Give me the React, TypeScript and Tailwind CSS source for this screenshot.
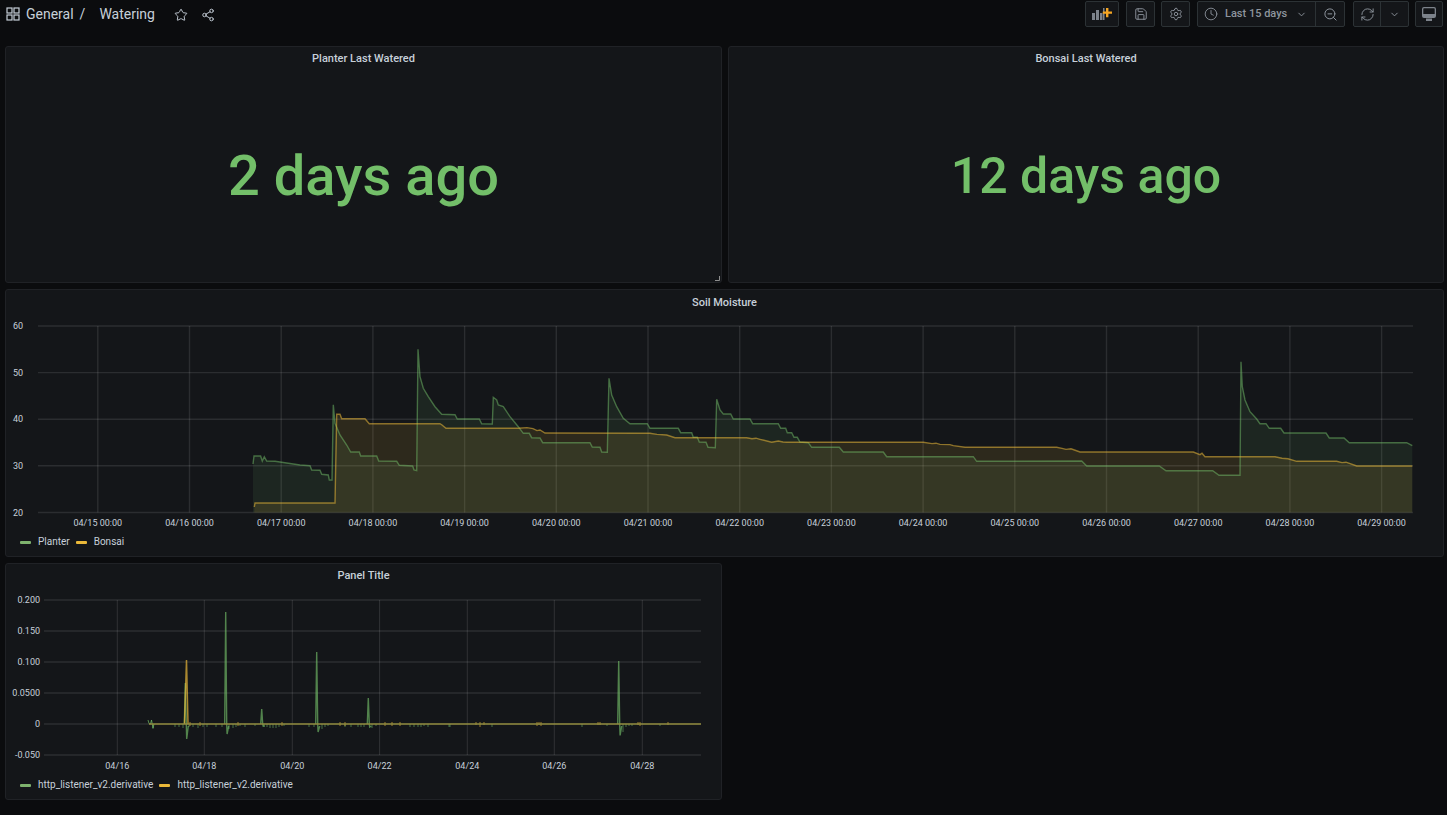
import React from 'react';
import { Star, Share2, Save, Settings, Clock, ChevronDown, ZoomOut, RefreshCw } from 'lucide-react';

const GREEN = '#73bf69';
const YELLOW = '#eab839';
const SWATCH_GREEN = '#7eb26d';

const planter: [number, number][] = [
  [253, 464], [254, 456], [260.6, 456], [262.3, 461], [264.3, 456.7], [266.7, 461], [275, 461.3], [300, 465], [310, 465.7],
  [311.7, 470], [320, 470.3], [321.7, 474.3], [328.3, 475], [329.3, 480], [332, 480], [333.3, 404.7], [335, 423.3], [340, 435],
  [346.7, 445], [350.7, 452], [359.3, 452], [360.7, 456], [376.7, 456], [378.7, 461], [396.7, 461.3], [399.3, 465.3], [412.7, 466],
  [414, 470], [416.7, 470.7], [418, 349.3], [420, 376.7], [423.3, 388.3], [428.3, 396.7], [435, 406.7], [441.7, 414.3], [455, 414.7],
  [457.3, 419], [479.3, 419], [481.7, 423.7], [492.3, 424], [493.3, 397.3], [496.7, 400], [498.3, 405], [503.3, 406.7], [510, 416.7],
  [518.3, 426.7], [523.3, 433.3], [529.3, 433.3], [531.7, 437.7], [540, 438], [542.7, 442.7], [590, 442.7], [592.3, 447], [600, 447.3],
  [601.7, 452], [607.3, 452.3], [609, 378.3], [611.7, 395], [616.7, 406.7], [623.3, 418.3], [630, 423.7], [647.3, 423.7], [650, 428.3],
  [678.3, 428.3], [680.7, 432.7], [691.7, 432.7], [693.3, 437.3], [697.3, 437.3], [699.3, 442], [706, 442.3], [708, 447.3], [715.3, 447.7],
  [716.7, 399.3], [720, 410], [723.3, 414], [730.7, 414], [733.3, 419], [750, 419], [752.7, 423.7], [778.3, 423.7], [780.7, 428.3],
  [785.7, 428.3], [787.3, 432.7], [791.7, 432.7], [794, 437.3], [797.3, 437.3], [800, 442], [808.3, 442.7], [811.7, 447.3], [839.3, 447.3],
  [843.3, 452], [883.3, 452], [886.7, 456.7], [973.3, 456.7], [976.7, 461.3], [1081.7, 461], [1086.7, 466], [1159.3, 466], [1166, 470.7],
  [1212.7, 470.7], [1219, 475.3], [1240, 475.3], [1241, 361.7], [1242.3, 386.7], [1245, 400], [1250, 411.7], [1256.7, 419], [1260, 423.7],
  [1266, 423.7], [1269.3, 428.3], [1280.7, 428.3], [1284, 433], [1326, 433], [1329.3, 438], [1344, 438], [1349.3, 442.7], [1406.7, 442.7],
  [1412.3, 445.7],
];

const bonsai: [number, number][] = [
  [254.3, 507], [255, 503], [335, 503], [336.7, 414.3], [340, 414.3], [341.7, 418.7], [365, 418.7], [369.3, 423.7], [440, 423.7],
  [442, 425], [446, 428.3], [518.3, 428.3], [527, 427.6], [533, 428.6], [537, 430.6], [540, 430], [545, 433], [640, 433.3], [650, 433.3],
  [657, 434.4], [666.7, 435], [675, 437.7], [746.7, 437.7], [752, 438.8], [756, 438.2], [760, 439.3], [771.7, 442.3], [778.3, 441],
  [783, 442], [786.7, 442.3], [923.3, 442.3], [932, 443.6], [936, 443.2], [940, 444.4], [950, 444.6], [953.3, 445.6], [965, 447.3],
  [1056.7, 447.3], [1062, 448.4], [1066, 449.4], [1071, 448.8], [1080, 452], [1193.3, 452], [1200, 454.6], [1202, 453.2], [1205, 456.7],
  [1275, 456.7], [1282, 458.2], [1288, 458.8], [1296.7, 461.3], [1336.7, 461.3], [1342, 462.6], [1346, 462.2], [1356.7, 466], [1412.3, 466],
];

const toPath = (pts: [number, number][]) => pts.map(([x, y], i) => `${i === 0 ? 'M' : 'L'}${x} ${y}`).join(' ');
const toArea = (pts: [number, number][], base: number) =>
  `${toPath(pts)} L${pts[pts.length - 1][0]} ${base} L${pts[0][0]} ${base} Z`;

const moistureDays = ['04/15', '04/16', '04/17', '04/18', '04/19', '04/20', '04/21', '04/22', '04/23', '04/24', '04/25', '04/26', '04/27', '04/28', '04/29'];
const moistureY = [[60, 326], [50, 372.6], [40, 419.2], [30, 465.8], [20, 512.5]];

const MoistureChart = () => (
  <svg width={1439} height={218} viewBox="5 315 1439 218" className="block" style={{ fontFamily: 'Roboto, sans-serif' }}>
    {moistureY.map(([v, y]) => (
      <g key={v}>
        <line x1={38} x2={1413} y1={y} y2={y} stroke="#ffffff" strokeOpacity={0.1} strokeWidth={1.4} />
        <text x={23} y={y + 3} textAnchor="end" fontSize={9} fill="#c7d0d9">{v}</text>
      </g>
    ))}
    {moistureDays.map((d, i) => {
      const x = 97.8 + i * 91.7;
      return (
        <g key={d}>
          <line x1={x} x2={x} y1={326} y2={512.5} stroke="#ffffff" strokeOpacity={0.1} strokeWidth={1.4} />
          <text x={x} y={525.5} textAnchor="middle" fontSize={9} fill="#c7d0d9">{`${d} 00:00`}</text>
        </g>
      );
    })}
    <path d={toArea(planter, 512.5)} fill={GREEN} fillOpacity={0.1} />
    <path d={toArea(bonsai, 512.5)} fill={YELLOW} fillOpacity={0.12} />
    <path d={toPath(planter)} fill="none" stroke={GREEN} strokeOpacity={0.5} strokeWidth={1.4} />
    <path d={toPath(bonsai)} fill="none" stroke={YELLOW} strokeOpacity={0.55} strokeWidth={1.4} />
  </svg>
);

const derivY = [['0.200', 600], ['0.150', 631], ['0.100', 662], ['0.0500', 693], ['0', 724], ['-0.050', 755]] as const;
const derivDays = [['04/16', 117.3], ['04/18', 204.3], ['04/20', 292.3], ['04/22', 379.6], ['04/24', 467.3], ['04/26', 554.3], ['04/28', 642.3]] as const;

// x, depth of the small ticks under the zero line
const greenTicks = [
  [153, 5], [175, 3], [179, 3], [183, 4], [189, 3], [193, 3], [198, 4], [203, 3], [207, 3], [216, 3], [222, 3], [229, 5], [233, 4],
  [236, 3], [240, 2], [245, 3], [255, 2], [264, 3], [267, 3], [270, 4], [273, 4], [276, 4], [279, 3], [284, 2], [309, 3], [314, 3],
  [322, 5], [325, 3], [328, 2], [345, 3], [351, 3], [358, 3], [361, 3], [364, 3], [372, 4], [376, 2], [410, 3], [414, 3], [418, 3],
  [421, 3], [424, 2], [428, 3], [449, 3], [450, 3], [492, 3], [582, 3], [607, 2], [623, 8], [626, 3], [629, 2], [632, 2], [660, 2],
];
const yellowTicks = [
  [190, 2], [200, 2], [238, 2], [282, 2], [340, 2], [345, 2], [385, 2], [392, 2], [400, 2], [480, 3], [476, 1], [484, 1], [537, 2],
  [539, 1], [541, 2], [598, 1], [600, 1], [638, 1], [640, 2], [668, 1],
];
const greenSpikes = [[185.3, 683, 739], [225.7, 612, 734], [261.7, 709, 726], [316.7, 652, 732], [368.3, 698, 727], [618.7, 661, 735.5]];

const DerivativeChart = () => (
  <svg width={717} height={190} viewBox="5 588 717 190" className="block" style={{ fontFamily: 'Roboto, sans-serif' }}>
    {derivY.map(([v, y]) => (
      <g key={v}>
        <line x1={44} x2={701} y1={y} y2={y} stroke="#ffffff" strokeOpacity={0.1} strokeWidth={1.3} />
        <text x={40} y={y + 3} textAnchor="end" fontSize={9} fill="#c7d0d9">{v}</text>
      </g>
    ))}
    {derivDays.map(([d, x]) => (
      <g key={d}>
        <line x1={x} x2={x} y1={600} y2={755} stroke="#ffffff" strokeOpacity={0.12} />
        <text x={x} y={769} textAnchor="middle" fontSize={9} fill="#c7d0d9">{d}</text>
      </g>
    ))}
    <path d="M148 720 L149 723.5 L150.5 724 L151.5 720 L153 728 L154 724" fill="none" stroke={GREEN} strokeOpacity={0.7} />
    {greenTicks.map(([x, d]) => (
      <line key={`g${x}`} x1={x} x2={x} y1={724} y2={724 + d} stroke={GREEN} strokeOpacity={0.55} />
    ))}
    {greenSpikes.map(([x, top, bottom]) => (
      <path key={x} d={`M${x - 1} 724 L${x} ${top} L${x + 1} 724 L${x + 1.4} ${bottom} L${x + 3} 726`} fill="none" stroke={GREEN} strokeOpacity={0.65} strokeWidth={1.4} />
    ))}
    <path d="M184.5 724 L186.5 660 L188 724" fill="none" stroke={YELLOW} strokeOpacity={0.7} strokeWidth={1.5} />
    {yellowTicks.map(([x, d]) => (
      <line key={`y${x}`} x1={x} x2={x} y1={722} y2={724 + d} stroke={YELLOW} strokeOpacity={0.65} />
    ))}
    <line x1={149} x2={701} y1={724} y2={724} stroke="#8f8a3c" strokeWidth={1.7} />
  </svg>
);

const Panel = ({ title, className, titleClassName = 'pt-[4px]', children }: { title: string; className: string; titleClassName?: string; children: React.ReactNode }) => (
  <div className={`relative flex flex-col rounded-[3px] border border-[#202226] bg-[#141619] ${className}`}>
    <div className={`h-[24px] shrink-0 text-center text-[11px] leading-[16px] font-medium text-[#c7d0d9] ${titleClassName}`}>{title}</div>
    {children}
  </div>
);

const BigStat = ({ value, className }: { value: string; className: string }) => (
  <div className={`flex flex-1 items-center justify-center pb-[2px] leading-none font-medium text-[#73bf69] ${className}`}>{value}</div>
);

const LegendItem = ({ color, label }: { color: string; label: string }) => (
  <div className="flex items-center gap-[7px]">
    <span className="h-[3px] w-[11px] rounded-[1px]" style={{ backgroundColor: color }} />
    <span>{label}</span>
  </div>
);

const ToolButton = ({ className, children }: { className: string; children: React.ReactNode }) => (
  <div className={`flex h-[26px] items-center justify-center rounded-[2px] border border-[#2c3235] bg-[#141619] text-[#8e959e] ${className}`}>
    {children}
  </div>
);

const AppsIcon = () => (
  <svg width={14} height={14} viewBox="0 0 14 14" fill="none" stroke="#c7d0d9" strokeWidth={1.2}>
    <rect x={1} y={1} width={5} height={5} />
    <rect x={8} y={1} width={5} height={5} />
    <rect x={1} y={8} width={5} height={5} />
    <rect x={8} y={8} width={5} height={5} />
  </svg>
);

const AddPanelIcon = () => (
  <svg width={20} height={12} viewBox="0 0 20 12">
    <path d="M0 5h3v7H0zM4 2h3v10H4zM8 5h2.500v7H8zM11 0h1.500v12H11z" fill="#7d838b" />
    <path d="M14 0h2.400v3.400H20v2.400h-3.600v3.400H14V5.800h-3.200V3.400H14z" fill="#f5a623" />
  </svg>
);

const MonitorIcon = () => (
  <svg width={16} height={16} viewBox="0 0 16 16" fill="#7d838b">
    <path fillRule="evenodd" d="M3 1h10a2 2 0 0 1 2 2v7a2 2 0 0 1-2 2H3a2 2 0 0 1-2-2V3a2 2 0 0 1 2-2zm0 1.300a.7.7 0 0 0-.7.7v5h11.400V3a.7.7 0 0 0-.7-.7z" />
    <path d="M5 12.500h6V15H5z" />
  </svg>
);

export default function App() {
  return (
    <div className="min-h-[815px] bg-[#0b0c0e] font-['Roboto',sans-serif] text-[#c7d0d9]">
      <header className="flex h-[46px] items-start justify-between pt-[1px] pr-[4px] pl-[6px]">
        <div className="flex h-[26px] items-center text-[14px] text-[#c7d0d9]">
          <AppsIcon />
          <span className="ml-[6px]">General</span>
          <span className="ml-[6px]">/</span>
          <span className="ml-[14px]">Watering</span>
          <Star size={14} strokeWidth={1.6} className="mt-[2px] ml-[19px]" />
          <Share2 size={14} strokeWidth={1.6} className="mt-[2px] ml-[13px]" />
        </div>
        <div className="flex items-start">
          <ToolButton className="w-[34px]"><AddPanelIcon /></ToolButton>
          <ToolButton className="ml-[7px] w-[29px]"><Save size={14} strokeWidth={1.6} /></ToolButton>
          <ToolButton className="ml-[6px] w-[29px]"><Settings size={14} strokeWidth={1.6} /></ToolButton>
          <div className="ml-[7px] flex h-[26px] w-[148px] items-center rounded-[2px] border border-[#2c3235] bg-[#141619] text-[#8e959e]">
            <div className="flex h-full w-[118px] items-center border-r border-[#2c3235] pl-[6px]">
              <Clock size={14} strokeWidth={1.5} />
              <span className="ml-[7px] text-[11px] font-medium">Last 15 days</span>
              <ChevronDown size={11} className="ml-[9px]" />
            </div>
            <div className="flex flex-1 justify-center"><ZoomOut size={15} strokeWidth={1.6} /></div>
          </div>
          <div className="ml-[8px] flex h-[26px] w-[56px] items-center rounded-[2px] border border-[#2c3235] bg-[#141619] text-[#8e959e]">
            <div className="flex h-full w-[27px] items-center justify-center border-r border-[#2c3235]"><RefreshCw size={15} strokeWidth={1.5} /></div>
            <div className="flex flex-1 justify-center"><ChevronDown size={11} /></div>
          </div>
          <ToolButton className="ml-[6px] w-[28px]"><MonitorIcon /></ToolButton>
        </div>
      </header>

      <div className="flex flex-col gap-[6px] pl-[5px]">
        <div className="flex gap-[6px]">
          <Panel title="Planter Last Watered" className="h-[237px] w-[717px]">
            <BigStat value="2 days ago" className="text-[56px]" />
            <svg width={5} height={5} viewBox="0 0 5 5" fill="none" className="absolute right-[1px] bottom-[1px]" stroke="#8e8e8e">
              <path d="M4.500 0V4.500H0" />
            </svg>
          </Panel>
          <Panel title="Bonsai Last Watered" className="h-[237px] w-[716px]">
            <BigStat value="12 days ago" className="text-[50px]" />
          </Panel>
        </div>

        <Panel title="Soil Moisture" className="h-[268px] w-[1439px]" titleClassName="pt-[5px]">
          <div className="-mx-px mt-[1px]"><MoistureChart /></div>
          <div className="flex gap-[6px] pt-[1px] pl-[14px] text-[10px] leading-[16px]">
            <LegendItem color={SWATCH_GREEN} label="Planter" />
            <LegendItem color={YELLOW} label="Bonsai" />
          </div>
        </Panel>

        <Panel title="Panel Title" className="h-[237px] w-[717px]">
          <div className="-mx-px"><DerivativeChart /></div>
          <div className="flex gap-[6px] pl-[14px] text-[10px] leading-[14px]">
            <LegendItem color={SWATCH_GREEN} label="http_listener_v2.derivative" />
            <LegendItem color={YELLOW} label="http_listener_v2.derivative" />
          </div>
        </Panel>
      </div>
    </div>
  );
}
